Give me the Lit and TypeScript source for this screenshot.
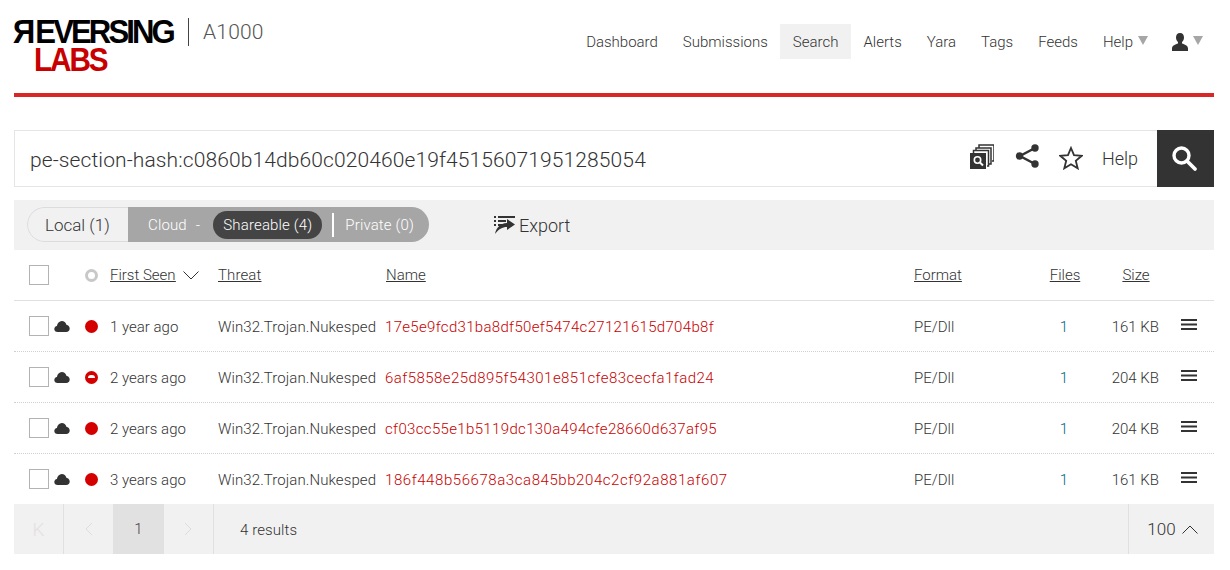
import { LitElement, html, css } from "lit";
import { customElement } from "lit/decorators.js";

const rows = [
  { age: "1 year ago", hash: "17e5e9fcd31ba8df50ef5474c27121615d704b8f", size: "161 KB", blocked: false, track: 0.32 },
  { age: "2 years ago", hash: "6af5858e25d895f54301e851cfe83cecfa1fad24", size: "204 KB", blocked: true, track: 0.45 },
  { age: "2 years ago", hash: "cf03cc55e1b5119dc130a494cfe28660d637af95", size: "204 KB", blocked: false, track: 0.35 },
  { age: "3 years ago", hash: "186f448b56678a3ca845bb204c2cf92a881af607", size: "161 KB", blocked: false, track: 0.57 },
];

const caret = html`<svg class="caret" width="10" height="9" viewBox="0 0 10 9"><path d="M0 0h10L5 9z" fill="#a6a6a6"/></svg>`;
const cloud = html`<svg class="cloud" width="16" height="13" viewBox="0 0 16 13"><path d="M3.600 12C1.600 12 .3 10.700.3 9c0-1.600 1.100-2.800 2.600-3C3.300 3.200 5.300 1 7.800 1c2.300 0 4.100 1.500 4.600 3.700 1.900.2 3.300 2 3.300 3.800C15.700 10.500 14.200 12 12.300 12z" fill="#333"/></svg>`;
const burger = html`<svg width="16" height="13" viewBox="0 0 16 13"><path d="M0 0h16v2H0zM0 4.500h16v2H0zM0 9h16v2H0z" fill="#333"/></svg>`;

@customElement("app-root")
export class AppRoot extends LitElement {
  static styles = css`
    :host { display: block; height: 570px; background: #fff; font-family: Roboto, "Noto Sans", sans-serif; font-weight: 300; color: #333; padding: 0 16px 0 14px; box-sizing: border-box; overflow: hidden; }
    header { display: flex; height: 97px; border-bottom: 4px solid #d92626; box-sizing: border-box; }
    .logo { width: 159px; margin-top: 16px; font-family: "Liberation Sans", sans-serif; font-weight: 700; }
    .logo div { white-space: nowrap; transform-origin: left center; }
    .rev { font-size: 34px; letter-spacing: -3.2px; color: #000; height: 31px; line-height: 31px; transform: scaleX(.915); padding-left: 2px; }
    .rev span { display: inline-block; transform: scaleX(-1); }
    .labs { font-size: 33px; line-height: 26px; letter-spacing: -2.3px; color: #c80000; margin-left: 20px; transform: scaleX(.9); }
    .product { display: flex; align-items: center; height: 28px; margin: 18px 0 0 15px; padding-left: 14px; border-left: 1px solid #444; font-size: 21px; letter-spacing: .2px; color: #555; }
    nav { margin-left: auto; display: flex; height: 35px; margin-top: 24px; font-size: 15px; align-items: center; }
    nav a { display: flex; align-items: center; gap: 5px; height: 35px; padding: 0 12.500px; }
    nav a.text { padding-top: 1px; height: 34px; }
    nav a.on { background: #f1f1f1; }
    nav a.user { padding: 0 11px 0 11.500px; }
    nav a.user .person { margin-top: 2px; }
    .caret { margin-top: -2px; }
    .search { display: flex; align-items: center; height: 57px; margin-top: 33px; border: 1px solid #e5e5e5; border-right: 0; box-sizing: border-box; }
    .query { flex: 1; font-size: 21px; letter-spacing: .107px; padding: 2px 0 0 15px; white-space: nowrap; }
    .tools { display: flex; align-items: center; }
    .stack { margin-bottom: 4px; }
    .share-ic { margin: 0 0 6px 21px; }
    .star { margin: 0 0 2px 20px; }
    .help { font-size: 18px; margin: 0 19px 0 19px; }
    .go { width: 57px; height: 57px; margin: -1px 0; background: #333; display: flex; align-items: center; justify-content: center; }
    .go svg { margin: 0 4px 2px 0; }
    .toolbar { display: flex; align-items: center; height: 50px; margin-top: 13px; padding-left: 13px; background: #f1f1f1; }
    .pill { display: flex; height: 35px; width: 402px; border-radius: 18px; overflow: hidden; font-size: 15px; letter-spacing: .15px; margin-top: -1px; }
    .local { width: 101px; border: 1px solid #dcdcdc; border-right: 0; border-radius: 18px 0 0 18px; box-sizing: border-box; padding-left: 17px; display: flex; align-items: center; font-size: 17px; letter-spacing: 0; }
    .cloudpart { flex: 1; background: #a6a6a6; color: #fff; display: flex; align-items: center; padding-left: 20px; }
    .dash { margin: 0 13px 0 9px; }
    .share { background: #444; border-radius: 14px; height: 28px; display: flex; align-items: center; padding: 0 10px; width: 109px; box-sizing: border-box; white-space: nowrap; }
    .sep { width: 2px; height: 24px; background: #fff; margin: 0 11px 0 10px; }
    .export { display: flex; align-items: center; gap: 3px; margin-left: 65px; font-size: 18px; }
    .grid { display: grid; grid-template-columns: 15px 25px 31px 25px 108px 168px 528px 126px 50px 78px 1fr; align-items: center; }
    .head { height: 51px; border-bottom: 1px solid #e0e0e0; box-sizing: border-box; font-size: 15px; text-decoration: underline; }
    .head .sz { padding-left: 14px; }
    .head .th { letter-spacing: .12px; }
    .row { height: 51px; border-bottom: 1px dotted #d0d0d0; box-sizing: border-box; font-size: 15px; }
    .row.last { border-bottom: 0; height: 50px; }
    .row .txt { padding-top: 2px; }
    .box { display: block; width: 20px; height: 20px; border: 1px solid #b3b3b3; box-sizing: border-box; background: #fff; }
    .dot { display: block; width: 13px; height: 13px; border-radius: 50%; background: #d40000; position: relative; }
    .dot.blocked::after { content: ""; position: absolute; left: 3px; right: 3px; top: 4px; height: 3.500px; background: #fff; border-radius: 3px 3px 0 0; }
    .ring { display: block; width: 13px; height: 13px; border-radius: 50%; border: 3.500px solid #c8c8c8; box-sizing: border-box; }
    .sort { display: flex; align-items: center; gap: 7px; }
    .sort span { text-decoration: underline; }
    .hash { color: #c80000; white-space: nowrap; margin-left: -1px; }
    .threat { white-space: nowrap; letter-spacing: .09px; }
    .c { text-align: center; }
    .cnt { color: #005f86; padding-right: 2px; }
    .r { text-align: right; padding-right: 9px; }
    .menu { display: flex; padding-left: 13px; margin-top: -1px; }
    .pager { display: flex; align-items: center; height: 50px; background: #f1f1f1; font-size: 15px; }
    .pager > div { height: 50px; display: flex; align-items: center; justify-content: center; }
    .pg { width: 50px; border-right: 1px solid #e0e0e0; box-sizing: border-box; color: #e4e0e0; font-size: 19px; }
    .pg.prev { width: 49px; border: 0; }
    .pg.cur { width: 51px; background: #e1e1e1; border: 0; color: #4a3a44; font-size: 15px; }
    .results { padding: 1px 0 0 26px; box-sizing: border-box; flex: 1; justify-content: flex-start !important; letter-spacing: .1px; }
    .per { width: 86px; border-left: 1px solid #e0e0e0; box-sizing: border-box; gap: 6px; font-size: 17px; padding-left: 2px; }
  `;

  render() {
    return html`
      <header>
        <div class="logo">
          <div class="rev"><span>R</span>EVERSING</div>
          <div class="labs">LABS</div>
        </div>
        <div class="product">A1000</div>
        <nav>
          <a class="text">Dashboard</a><a class="text">Submissions</a><a class="text on">Search</a><a class="text">Alerts</a><a class="text">Yara</a><a class="text">Tags</a><a class="text">Feeds</a>
          <a>Help ${caret}</a>
          <a class="user">
            <svg class="person" width="16" height="19" viewBox="0 0 16 19"><path d="M8 0c2.700 0 4 2 4 4.500 0 2-1 3.500-2 4.500v1.500c2.500 1 6 1.700 6 5V18H0v-2.500c0-3.300 3.500-4 6-5V9C5 8 4 6.500 4 4.500 4 2 5.300 0 8 0z" fill="#333"/></svg>
            ${caret}
          </a>
        </nav>
      </header>

      <div class="search">
        <div class="query">pe-section-hash:c0860b14db60c020460e19f45156071951285054</div>
        <div class="tools">
          <svg class="stack" width="24" height="25" viewBox="0 0 24 25" fill="none">
            <path d="M9 4V1h15v16h-2" stroke="#333" stroke-width="1.500"/><path d="M6 7V4h15v16h-2" stroke="#333" stroke-width="1.500"/><path d="M3.500 9V6.500h15V22h-1.500" stroke="#333" stroke-width="1.500"/>
            <rect x="0" y="9" width="16" height="16" fill="#333"/><circle cx="7.500" cy="16" r="3.200" stroke="#fff" stroke-width="1.600"/><path d="M10 18.500l3 3" stroke="#fff" stroke-width="2"/>
          </svg>
          <svg class="share-ic" width="24" height="24" viewBox="0 0 24 24"><path d="M20 4L5 12l15 8" fill="none" stroke="#333" stroke-width="2.500"/><circle cx="20" cy="4" r="3.700" fill="#333"/><circle cx="20" cy="20" r="3.700" fill="#333"/><circle cx="4.500" cy="12" r="3.700" fill="#333"/></svg>
          <svg class="star" width="24" height="24" viewBox="0 0 24 24"><path d="M12 2l3 7.200 7.700.6-5.900 5 1.900 7.500L12 18.200l-6.700 4.100 1.900-7.500-5.900-5 7.700-.6z" fill="none" stroke="#333" stroke-width="1.800"/></svg>
          <div class="help">Help</div>
          <div class="go"><svg width="28" height="28" viewBox="0 0 28 28"><circle cx="11.500" cy="11.500" r="7.500" fill="none" stroke="#fff" stroke-width="3.400"/><path d="M17 17l8 8" stroke="#fff" stroke-width="3.800" stroke-linecap="round"/></svg></div>
        </div>
      </div>

      <div class="toolbar">
        <div class="pill">
          <div class="local">Local (1)</div>
          <div class="cloudpart">Cloud <span class="dash">-</span>
            <div class="share">Shareable (4)</div><span class="sep"></span>Private (0)
          </div>
        </div>
        <div class="export">
          <svg width="22" height="20" viewBox="0 0 22 20"><path d="M4 1h17v2H4zM0 1h2v2H0zM0 5h2v2H0zM4 5h8v2H4zM0 9h2v2H0zM4 9h4v2H4z" fill="#333"/><path d="M13 4l8 5.500-8 5.500v-3C8 12 5 14 1 19c1-6 5-10.500 12-11z" fill="#333"/></svg>
          Export
        </div>
      </div>

      <div class="grid head">
        <i></i><span class="box"></span><i></i><span class="ring"></span>
        <div class="sort"><span>First Seen</span><svg width="16" height="9" viewBox="0 0 16 9"><path d="M.5.500L8 8 15.500.500" fill="none" stroke="#333"/></svg></div>
        <div class="th">Threat</div><div>Name</div><div>Format</div><div class="c">Files</div><div class="c sz">Size</div><i></i>
      </div>

      ${rows.map((r, i) => html`
        <div class="grid row ${i === rows.length - 1 ? "last" : ""}">
          <i></i><span class="box"></span>${cloud}<span class="dot ${r.blocked ? "blocked" : ""}"></span>
          <div class="txt">${r.age}</div>
          <div class="txt threat">Win32.Trojan.Nukesped</div>
          <div class="txt hash" style="letter-spacing:${r.track}px">${r.hash}</div>
          <div class="txt">PE/Dll</div>
          <div class="txt c cnt">1</div>
          <div class="txt r">${r.size}</div>
          <div class="menu">${burger}</div>
        </div>`)}

      <div class="pager">
        <div class="pg">K</div>
        <div class="pg prev"><svg width="9" height="14" viewBox="0 0 9 14"><path d="M8 1L2 7l6 6" fill="none" stroke="#ddd"/></svg></div>
        <div class="pg cur">1</div>
        <div class="pg"><svg width="9" height="14" viewBox="0 0 9 14"><path d="M1 1l6 6-6 6" fill="none" stroke="#ddd"/></svg></div>
        <div class="results">4 results</div>
        <div class="per">100 <svg width="16" height="9" viewBox="0 0 16 9"><path d="M.5 8.500L8 1l7.500 7.500" fill="none" stroke="#333"/></svg></div>
      </div>
    `;
  }
}
